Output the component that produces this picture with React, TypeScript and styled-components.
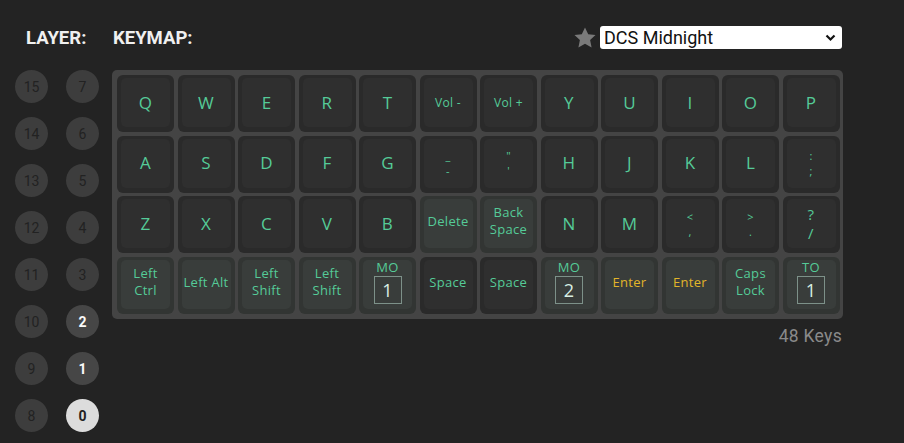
import styled, { createGlobalStyle } from "styled-components";

const GlobalStyle = createGlobalStyle`
  body {
    margin: 0;
    background: #232323;
    font-family: "Open Sans", "DejaVu Sans", sans-serif;
  }
`;

const Page = styled.div`
  width: 904px;
  height: 443px;
  overflow: hidden;
`;

const Header = styled.header`
  display: flex;
  align-items: center;
  height: 23px;
  padding: 26px 62px 0 26px;
`;

const Label = styled.h2<{ $w?: number }>`
  margin: 0;
  width: ${(p) => (p.$w ? `${p.$w}px` : "auto")};
  font-family: "Roboto", "Liberation Sans", sans-serif;
  font-weight: 700;
  font-size: 18.5px;
  color: #f0f0f0;
`;

const Spacer = styled.div`
  flex: 1;
`;

const Picker = styled.div`
  display: flex;
  align-items: center;
  gap: 3px;
`;

const Select = styled.div`
  width: 242px;
  height: 23px;
  box-sizing: border-box;
  background: #fff;
  border-radius: 3px;
  display: flex;
  align-items: center;
  justify-content: space-between;
  padding: 0 6px 0 4px;
  font-family: "Roboto", "Liberation Sans", sans-serif;
  font-size: 18px;
  color: #111;
`;

const Main = styled.div`
  display: flex;
  padding-top: 21px;
`;

const Layers = styled.div`
  width: 112px;
  display: grid;
  grid-template-columns: 33px 33px;
  grid-auto-rows: 33px;
  column-gap: 18px;
  row-gap: 14px;
  padding-left: 15px;
  box-sizing: border-box;
`;

const LayerDot = styled.div<{ $state?: "on" | "sel" }>`
  border-radius: 50%;
  display: flex;
  align-items: center;
  justify-content: center;
  font-family: "Roboto", "Liberation Sans", sans-serif;
  font-size: 14px;
  font-weight: ${(p) => (p.$state ? 700 : 400)};
  background: ${(p) => (p.$state === "sel" ? "#dcdcdc" : p.$state === "on" ? "#464646" : "#3d3d3d")};
  color: ${(p) => (p.$state === "sel" ? "#222" : p.$state === "on" ? "#fafafa" : "#222")};
`;

const Board = styled.div`
  display: flex;
  flex-direction: column;
  align-items: flex-end;
  gap: 7px;
`;

const Keys = styled.div`
  width: 731px;
  box-sizing: border-box;
  padding: 5px;
  background: #444444;
  border-radius: 5px;
  display: grid;
  grid-template-columns: repeat(12, 57px);
  grid-auto-rows: 57px;
  gap: 3.5px;
`;

const Key = styled.div<{ $mod?: boolean }>`
  border-radius: 6px;
  background: ${(p) => (p.$mod ? "#323533" : "#2a2a2a")};
  padding: 3px 4px 5px;
  box-sizing: border-box;
  display: flex;
`;

const Face = styled.div<{ $mod?: boolean; $gold?: boolean; $size?: number }>`
  flex: 1;
  border-radius: 5px;
  background: ${(p) => (p.$mod ? "#393d3b" : "#2f2f2f")};
  display: flex;
  flex-direction: column;
  align-items: center;
  justify-content: center;
  text-align: center;
  padding-bottom: ${(p) => (p.$mod || (p.$size ?? 17) === 13 ? 5 : 0)}px;
  font-size: ${(p) => p.$size ?? 17}px;
  font-weight: 500;
  line-height: ${(p) => (p.$size ?? 17) + 5}px;
  color: ${(p) => (p.$gold ? "#e2b52a" : "#55cb98")};
  letter-spacing: 0.3px;
  white-space: nowrap;
`;

const Line = styled.span`
  display: block;
  height: 17px;
  line-height: 17px;
`;

const Shifted = styled.span<{ $size?: number }>`
  font-size: ${(p) => p.$size ?? 11}px;
  line-height: ${(p) => (p.$size ?? 11) + 4}px;
`;

const Behavior = styled.span`
  font-size: 13px;
  line-height: 15px;
`;

const LayerBox = styled.span`
  width: 26px;
  height: 27px;
  border: 1px solid #7d9189;
  display: flex;
  align-items: center;
  justify-content: center;
  font-size: 18px;
  color: #d8efe4;
  margin-top: 1px;
`;

const Count = styled.div`
  font-family: "Roboto", "Liberation Sans", sans-serif;
  font-size: 17.5px;
  letter-spacing: 0.3px;
  color: #8a8a8a;
  padding-right: 1px;
`;

type K =
  | { t: "l"; a: string; s?: number; mod?: boolean; gold?: boolean }
  | { t: "sym"; top: string; bot: string; s?: number }
  | { t: "layer"; b: string; n: string };

const l = (a: string, s?: number, mod?: boolean, gold?: boolean): K => ({ t: "l", a, s, mod, gold });
const sym = (top: string, bot: string, s?: number): K => ({ t: "sym", top, bot, s });

const keys: K[] = [
  ...["Q", "W", "E", "R", "T"].map((a) => l(a)),
  l("Vol -", 12),
  l("Vol +", 12),
  ...["Y", "U", "I", "O", "P"].map((a) => l(a)),
  ...["A", "S", "D", "F", "G"].map((a) => l(a)),
  sym("_", "-"),
  sym('"', "'"),
  ...["H", "J", "K", "L"].map((a) => l(a)),
  sym(":", ";"),
  ...["Z", "X", "C", "V", "B"].map((a) => l(a)),
  l("Delete", 13, true),
  l("Back\nSpace", 13, true),
  l("N"),
  l("M"),
  sym("<", ","),
  sym(">", "."),
  sym("?", "/", 15),
  l("Left\nCtrl", 13, true),
  l("Left Alt", 13, true),
  l("Left\nShift", 13, true),
  l("Left\nShift", 13, true),
  { t: "layer", b: "MO", n: "1" },
  l("Space", 13),
  l("Space", 13),
  { t: "layer", b: "MO", n: "2" },
  l("Enter", 13, true, true),
  l("Enter", 13, true, true),
  l("Caps\nLock", 13, true),
  { t: "layer", b: "TO", n: "1" },
];

function renderKey(k: K, i: number) {
  if (k.t === "sym") {
    return (
      <Key key={i}>
        <Face>
          <Shifted $size={k.s}>{k.top}</Shifted>
          <Shifted $size={k.s}>{k.bot}</Shifted>
        </Face>
      </Key>
    );
  }
  if (k.t === "layer") {
    return (
      <Key key={i} $mod>
        <Face $mod>
          <Behavior>{k.b}</Behavior>
          <LayerBox>{k.n}</LayerBox>
        </Face>
      </Key>
    );
  }
  const lines = k.a.split("\n");
  return (
    <Key key={i} $mod={k.mod}>
      <Face $mod={k.mod} $gold={k.gold} $size={k.s}>
        {lines.length > 1 ? lines.map((line, j) => <Line key={j}>{line}</Line>) : k.a}
      </Face>
    </Key>
  );
}

const layerOrder = [15, 7, 14, 6, 13, 5, 12, 4, 11, 3, 10, 2, 9, 1, 8, 0];

function Star() {
  return (
    <svg width="24" height="24" viewBox="0 0 24 24">
      <path
        d="M12 1.5l3.2 6.7 7.3.9-5.4 5 1.5 7.3L12 17.8l-6.6 3.6 1.5-7.3-5.4-5 7.3-.9z"
        fill="#7a7a7a"
      />
    </svg>
  );
}

function Chevron() {
  return (
    <svg width="11" height="8" viewBox="0 0 11 8">
      <path d="M1.5 1.5l4 4 4-4" stroke="#111" strokeWidth="2.2" fill="none" />
    </svg>
  );
}

export default function App() {
  return (
    <Page>
      <GlobalStyle />
      <Header>
        <Label $w={87}>LAYER:</Label>
        <Label>KEYMAP:</Label>
        <Spacer />
        <Picker>
          <Star />
          <Select>
            DCS Midnight
            <Chevron />
          </Select>
        </Picker>
      </Header>
      <Main>
        <Layers>
          {layerOrder.map((n) => (
            <LayerDot key={n} $state={n === 0 ? "sel" : n <= 2 ? "on" : undefined}>
              {n}
            </LayerDot>
          ))}
        </Layers>
        <Board>
          <Keys>{keys.map(renderKey)}</Keys>
          <Count>48 Keys</Count>
        </Board>
      </Main>
    </Page>
  );
}
